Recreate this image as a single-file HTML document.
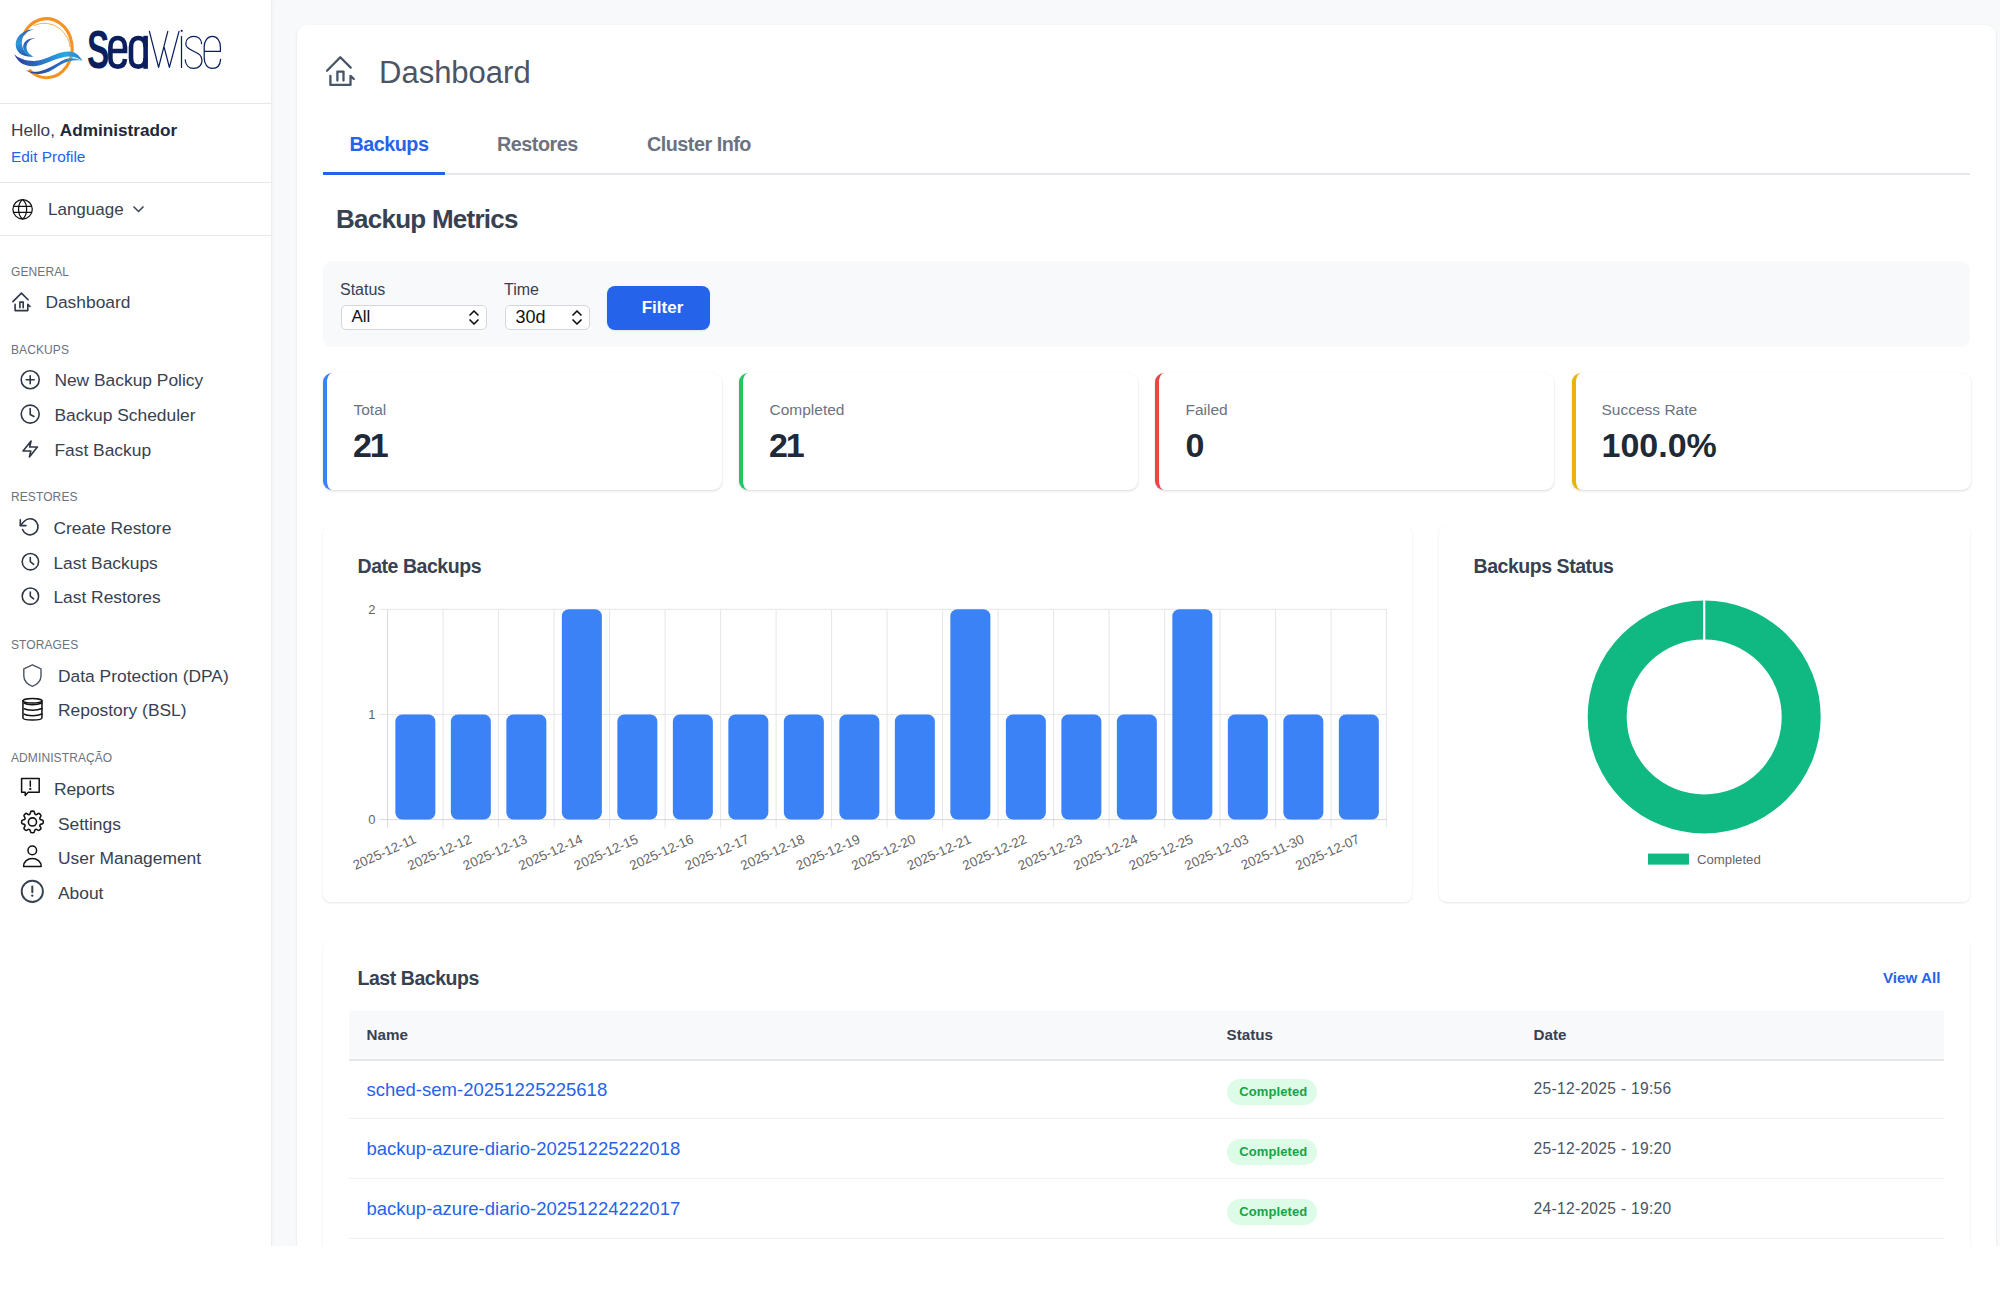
<!DOCTYPE html>
<html>
<head>
<meta charset="utf-8">
<style>
*{box-sizing:border-box;margin:0;padding:0}
html,body{width:2000px;height:1313px;overflow:hidden;background:#fff;font-family:"Liberation Sans",sans-serif}
.t{position:absolute;white-space:nowrap;line-height:20px;height:20px}
#app{position:absolute;left:0;top:0;width:2000px;height:1246px;overflow:hidden;background:#f8f9fb}
#side{position:absolute;left:0;top:0;width:272px;height:1246px;background:#fff;border-right:1px solid #eceef2;box-shadow:1px 0 3px rgba(0,0,0,0.03)}
.hr{position:absolute;left:0;width:271px;height:1px;background:#e5e7eb}
.sec{font-size:12px;color:#6b7280;letter-spacing:0.1px}
.nav{font-size:17.4px;color:#374151}
.ico{position:absolute;overflow:visible}
#card{position:absolute;left:297px;top:25px;width:1699px;height:1300px;background:#fff;border-radius:10px;box-shadow:0 1px 3px rgba(0,0,0,0.08),0 1px 2px rgba(0,0,0,0.04)}
.tab{font-size:19.8px;font-weight:700;color:#6b7280;height:20px;letter-spacing:-0.5px}
.sel{position:absolute;height:24.5px;background:#fff;border:1px solid #d4d6db;border-radius:5px;font-size:17px;line-height:22.5px;padding-left:10px;color:#111}
.mc{position:absolute;top:373px;width:399px;height:117px;background:#fff;border-left:4px solid #3b82f6;border-radius:9px;box-shadow:0 1px 3px rgba(0,0,0,0.1),0 1px 2px rgba(0,0,0,0.06)}
.ml{top:400px;font-size:15.5px;color:#6b7280}
.mv{top:425px;height:40px;line-height:40px;font-size:34px;font-weight:700;color:#1f2937}
.cd{position:absolute;background:#fff;border-radius:8px;box-shadow:0 1px 3px rgba(0,0,0,0.07),0 1px 2px rgba(0,0,0,0.04)}
.h2{font-size:19.5px;font-weight:700;color:#374151;letter-spacing:-0.45px}
.th{top:1025px;font-size:15.2px;font-weight:700;color:#374151}
.td{font-size:18.5px;color:#2563eb}
.dt{font-size:15.6px;color:#4b5563;letter-spacing:0.3px}
.badge{position:absolute;width:90px;height:26px;border-radius:13px;background:#dcfce7;color:#16a34a;font-size:13px;font-weight:700;line-height:26px;text-align:center;padding-left:2.5px;letter-spacing:0.1px}
</style>
</head>
<body>
<div id="app">
<div id="side">
  <!-- logo -->
  <svg class="ico" style="left:0;top:0" width="240" height="100" viewBox="0 0 240 100">
    <defs>
      <linearGradient id="gc1" x1="0" y1="0" x2="0" y2="1">
        <stop offset="0" stop-color="#2766bb"/><stop offset="0.5" stop-color="#2a9bd8"/><stop offset="1" stop-color="#2c58b2"/>
      </linearGradient>
      <linearGradient id="gc2" x1="0" y1="0" x2="0" y2="1">
        <stop offset="0" stop-color="#2d4aa8"/><stop offset="1" stop-color="#25a3de"/>
      </linearGradient>
      <linearGradient id="gw1" x1="0" y1="0" x2="1" y2="0">
        <stop offset="0" stop-color="#2b3896"/><stop offset="0.35" stop-color="#2b6fc2"/><stop offset="0.75" stop-color="#28a8e0"/><stop offset="1" stop-color="#2a7fcf"/>
      </linearGradient>
      <linearGradient id="gw2" x1="0" y1="0" x2="1" y2="0">
        <stop offset="0" stop-color="#2b3896"/><stop offset="0.6" stop-color="#2a6cc0"/><stop offset="1" stop-color="#28a6e0"/>
      </linearGradient>
    </defs>
    <path d="M23.5 35 A25.7 29.5 0 1 1 29 69.8" fill="none" stroke="#f39324" stroke-width="3.1"/>
    <path d="M34 25.6 C45 20.5 60 24 67.5 38 C69 41 69.8 44 70 47" fill="none" stroke="#f39324" stroke-width="0.9" opacity="0.85"/>
    <path fill="url(#gc1)" d="M33.9 29.5 C26 28.5 16 35 15.7 44 C15.5 52 22 57.5 33.9 56.6 C27 55 22.5 51 21.9 44 C21.5 36 26 31 33.9 29.5 Z"/>
    <path fill="url(#gc2)" d="M35.4 38.2 C28 37.5 23 42 23.1 47 C23.2 52 27 56 33.5 56.6 C29.5 54.5 26.5 51.5 26.5 47.5 C26.5 42.5 30 39 35.4 38.2 Z"/>
    <path fill="url(#gw1)" d="M14.1 54 C18 58.5 26 61 34.4 60.9 C44 60.5 54 54 61.3 52.4 C67 51 74 50.5 77.3 54.5 C79.5 56.5 81.5 59 82.6 60.9 C78 58 74 56.4 68 56.6 C58 57.5 48 63 40 65.2 C33 67 27 66 22.7 64.1 C19 62 16 58 14.1 54 Z"/>
    <path fill="url(#gw2)" d="M25.3 69.4 C29 71.5 32 72 36 71.8 C44 71 53 66 61.3 60.9 C66 58.5 70 58 74 58.4 C77 58.8 79 59.3 82 60.5 C78 60 73 60 69.3 60.9 C64 62.5 58 66 49.3 71.6 C44 74 39 74.5 36 73.7 C31 73 27.5 71.5 25.3 69.4 Z"/>
    <text x="87" y="68.5" fill="#0b1f5e" font-family="Liberation Sans" font-weight="700" font-size="54" transform="translate(87 0) scale(0.62 1) translate(-87 0)">S</text>
    <g fill="none" stroke="#0b1f5e" stroke-width="4.6">
      <path d="M110.4 51 H125 V47 C125 41 122 38 117.7 38 C113.4 38 110.4 41 110.4 47 V58 C110.4 64 113.4 66.6 117.7 66.6 C122 66.6 124.6 64 125 59"/>
      <path d="M145.6 35.8 V68.8"/>
      <path d="M145.6 47 C145.6 41 142.5 38 138.3 38 C134 38 131 41 131 47 V58 C131 64 134 66.6 138.3 66.6 C142.5 66.6 145.6 64 145.6 58"/>
    </g>
    <g fill="none" stroke="#0b1f5e" stroke-width="1.25" stroke-linecap="round" stroke-linejoin="round">
      <path d="M149.4 31.4 L158.6 67.4 L167.8 31.4 M164.2 47.4 L169.4 67.4 L179 31.4"/>
      <path d="M181.5 36.6 V67.4"/>
      <path d="M201.6 43.6 C201.3 39 198 36.4 193.8 36.4 C189.2 36.4 185.8 39.3 185.8 43.5 C185.8 47.3 188.4 48.7 193.6 51.2 C199 53.7 202 55.5 202 60.4 C202 65.2 198.5 68.4 193.8 68.4 C188.8 68.4 185.4 65 185.2 59.8"/>
      <path d="M204.2 51.4 H220.4 V47 C220.4 40.5 217 36.4 212.4 36.4 C207.6 36.4 204.2 40.6 204.2 47 V57.8 C204.2 64.4 207.6 68.4 212.4 68.4 C217 68.4 220.2 65 220.6 59.4"/>
    </g>
    <circle cx="181.7" cy="30.8" r="1.1" fill="#0b1f5e"/>
  </svg>
  <div class="hr" style="top:103px"></div>
  <div class="t" style="left:11px;top:120px;font-size:17.2px;color:#374151">Hello, <b style="color:#1f2937">Administrador</b></div>
  <div class="t" style="left:11px;top:147px;font-size:15.4px;color:#2563eb">Edit Profile</div>
  <div class="hr" style="top:182px"></div>
  <svg class="ico" style="left:0;top:190px" width="40" height="40" viewBox="0 190 40 40" fill="none" stroke="#111" stroke-width="1.25">
    <circle cx="22.6" cy="209.3" r="9.7"/>
    <path d="M22.6 199.6 C17.2 203.8 17.2 214.8 22.6 219 M22.6 199.6 C28 203.8 28 214.8 22.6 219"/>
    <path d="M13.6 206.45 H31.6 M13.6 212.3 H31.6"/>
  </svg>
  <div class="t nav" style="left:48px;top:200px;font-size:17px">Language</div>
  <svg class="ico" style="left:132px;top:204px" width="13" height="10" viewBox="0 0 13 10" fill="none" stroke="#374151" stroke-width="1.5"><path d="M1.5 2.5l5 5 5-5"/></svg>
  <div class="hr" style="top:235px"></div>
  <!-- nav -->
  <div class="t sec" style="left:11px;top:261.7px">GENERAL</div>
  <div class="t sec" style="left:11px;top:339.8px">BACKUPS</div>
  <div class="t sec" style="left:11px;top:486.6px">RESTORES</div>
  <div class="t sec" style="left:11px;top:634.6px">STORAGES</div>
  <div class="t sec" style="left:11px;top:747.5px">ADMINISTRAÇÃO</div>
  <div class="t nav" style="left:45.4px;top:292.4px">Dashboard</div>
  <div class="t nav" style="left:54.4px;top:370.4px">New Backup Policy</div>
  <div class="t nav" style="left:54.4px;top:405.4px">Backup Scheduler</div>
  <div class="t nav" style="left:54.4px;top:440.4px">Fast Backup</div>
  <div class="t nav" style="left:53.4px;top:518.0px">Create Restore</div>
  <div class="t nav" style="left:53.4px;top:552.6px">Last Backups</div>
  <div class="t nav" style="left:53.4px;top:587.0px">Last Restores</div>
  <div class="t nav" style="left:58.0px;top:665.8px">Data Protection (DPA)</div>
  <div class="t nav" style="left:58.0px;top:700.3px">Repostory (BSL)</div>
  <div class="t nav" style="left:53.9px;top:778.5px">Reports</div>
  <div class="t nav" style="left:58.0px;top:813.5px">Settings</div>
  <div class="t nav" style="left:58.0px;top:848.2px">User Management</div>
  <div class="t nav" style="left:58.0px;top:882.5px">About</div>
  <svg class="ico" style="left:0;top:0" width="271" height="1246" viewBox="0 0 271 1246" fill="none" stroke="#2d3748" stroke-width="1.6" stroke-linecap="round" stroke-linejoin="round">
    <!-- home -->
    <path d="M12.9 301.6 L21.4 293.1 L28.1 299.8"/>
    <path d="M15.1 304.4 V310.6 H27.8 V304.4 L30 306.5"/>
    <path d="M19.9 307.8 V302.1 H23.2 V307.8"/>
    <!-- plus circle -->
    <circle cx="30.2" cy="379.7" r="9"/>
    <path d="M30.2 375.7 V383.7 M26.2 379.7 H34.2"/>
    <!-- clock -->
    <circle cx="30.2" cy="414.1" r="9"/>
    <path d="M30.2 408.6 V414.5 L34 416.5"/>
    <!-- bolt -->
    <path d="M23 451 L31.1 441 L29.6 447 L37.4 447 L29.4 457 L30.8 451 Z"/>
    <!-- rotate ccw -->
    <path d="M22.5 529.5 A8 8 0 1 0 24.3 521.2 L20.3 525.5"/>
    <path d="M20.3 519.8 V525.6 H26"/>
    <!-- clocks -->
    <circle cx="30.4" cy="561.7" r="8.2"/>
    <path d="M30.3 557.6 V561.6 L33.6 564.3"/>
    <circle cx="30.4" cy="596.2" r="8.2"/>
    <path d="M30.3 592.1 V596.1 L33.6 598.8"/>
    <!-- shield -->
    <path stroke="#4b5563" stroke-width="1.4" d="M32.4 664.8 L23.8 668.8 V676 C23.8 681 28 685 32.4 686.3 C36.8 685 41 681 41 676 V668.8 Z"/>
    <!-- database -->
    <g stroke="#111" stroke-width="1.5">
      <ellipse cx="32.45" cy="700.8" rx="9.5" ry="2.3"/>
      <path d="M22.95 700.8 V717.8 C22.95 719.1 27 720.1 32.45 720.1 C37.9 720.1 41.95 719.1 41.95 717.8 V700.8"/>
      <path d="M24.2 703.2 C26 704.3 29 704.7 32.45 704.7 C36 704.7 39 704.3 41.9 703"/>
      <path d="M24.2 708.7 C26 709.8 29 710.2 32.45 710.2 C36 710.2 39 709.8 41.9 708.5"/>
      <path d="M24.2 714.2 C26 715.3 29 715.7 32.45 715.7 C36 715.7 39 715.3 41.9 714"/>
    </g>
    <g stroke="#111" stroke-width="1.5">
      <!-- reports -->
      <path d="M21.6 778.6 H39.2 V792.2 H28.2 L25.2 795.4 V792.2 H21.6 Z"/>
      <path d="M30.3 781 V786.2"/>
      <circle cx="30.3" cy="789" r="0.4" fill="#111"/>
      <!-- gear -->
      <g transform="translate(18.05 807.55) scale(1.2)" stroke-width="1.3">
      <path d="M10.343 3.94c.09-.542.56-.94 1.11-.94h1.093c.55 0 1.02.398 1.11.94l.149.894c.07.424.384.764.78.93.398.164.855.142 1.205-.108l.737-.527a1.125 1.125 0 0 1 1.45.12l.773.774c.39.389.44 1.002.12 1.45l-.527.737c-.25.35-.272.806-.107 1.204.165.397.505.71.93.78l.893.15c.543.09.94.559.94 1.109v1.094c0 .55-.397 1.02-.94 1.11l-.894.149c-.424.07-.764.383-.929.78-.165.398-.143.854.107 1.204l.527.738c.32.447.269 1.06-.12 1.45l-.774.773a1.125 1.125 0 0 1-1.449.12l-.738-.527c-.35-.25-.806-.272-1.203-.107-.398.165-.71.505-.781.929l-.149.894c-.09.542-.56.94-1.11.94h-1.094c-.55 0-1.019-.398-1.11-.94l-.148-.894c-.071-.424-.384-.764-.781-.93-.398-.164-.854-.142-1.204.108l-.738.527c-.447.32-1.06.269-1.45-.12l-.773-.774a1.125 1.125 0 0 1-.12-1.45l.527-.737c.25-.35.272-.806.108-1.204-.165-.397-.506-.71-.93-.78l-.894-.15c-.542-.09-.94-.56-.94-1.109v-1.094c0-.55.398-1.020.94-1.11l.894-.149c.424-.07.765-.383.93-.78.165-.398.143-.854-.108-1.204l-.526-.738a1.125 1.125 0 0 1 .12-1.45l.773-.773a1.125 1.125 0 0 1 1.45-.12l.737.527c.35.25.807.272 1.204.107.397-.165.71-.505.78-.929l.15-.894Z"/>
      <circle cx="12" cy="12" r="3.4"/>
      </g>
      <!-- user -->
      <circle cx="32.3" cy="850.4" r="4.3"/>
      <path d="M23.6 866.2 C23.6 861.6 27.6 858.4 32.3 858.4 C37 858.4 41.2 861.6 41.2 866.2 V866.4 H23.6 Z"/>
    </g>
    <!-- about -->
    <circle cx="32.3" cy="891.4" r="10.6" stroke="#374151" stroke-width="1.9"/>
    <path d="M32.3 886.4 V892.2" stroke="#374151" stroke-width="2"/>
    <circle cx="32.3" cy="895.6" r="0.6" fill="#374151" stroke="#374151" stroke-width="1.2"/>
  </svg>
</div>
<div id="card"></div>
<!-- header -->
<svg class="ico" style="left:318px;top:48px" width="44" height="44" viewBox="0 0 44 44" fill="none" stroke="#475569" stroke-width="2.3" stroke-linecap="round" stroke-linejoin="round">
  <path d="M9 22.8 L22.3 9.2 L32.7 19.6"/>
  <path d="M12.4 27.8 V36.9 H32.5 V27.8 L35.8 31"/>
  <path d="M19.4 32.5 V23.6 H25.5 V32.5"/>
</svg>
<div class="t" style="left:379px;top:52.5px;height:40px;line-height:40px;font-size:31px;color:#4b5563">Dashboard</div>
<!-- tabs -->
<div class="t tab" style="left:349.5px;top:134px;color:#2563eb">Backups</div>
<div class="t tab" style="left:497px;top:134px">Restores</div>
<div class="t tab" style="left:647px;top:134px">Cluster Info</div>
<div style="position:absolute;left:323px;top:173px;width:1647px;height:2px;background:#e5e7eb"></div>
<div style="position:absolute;left:323px;top:172px;width:122px;height:3px;background:#2563eb"></div>
<div class="t" style="left:336px;top:204px;height:30px;line-height:30px;font-size:26px;font-weight:700;color:#374151;letter-spacing:-0.75px">Backup Metrics</div>
<!-- filter -->
<div style="position:absolute;left:323px;top:261px;width:1647px;height:86px;background:#f8f9fb;border-radius:9px"></div>
<div class="t" style="left:340px;top:279.5px;font-size:16px;color:#374151">Status</div>
<div class="t" style="left:504px;top:279.5px;font-size:16px;color:#374151">Time</div>
<div class="sel" style="left:340.5px;top:305px;width:146px">All</div>
<div class="sel" style="left:504.5px;top:305px;width:85px;font-size:18px">30d</div>
<svg class="ico" style="left:466px;top:308px" width="16" height="20" viewBox="0 0 16 20" fill="none" stroke="#111" stroke-width="1.7" stroke-linecap="round" stroke-linejoin="round"><path d="M4 7 L8 3 L12 7 M4 12 L8 16 L12 12"/></svg>
<svg class="ico" style="left:569px;top:308px" width="16" height="20" viewBox="0 0 16 20" fill="none" stroke="#111" stroke-width="1.7" stroke-linecap="round" stroke-linejoin="round"><path d="M4 7 L8 3 L12 7 M4 12 L8 16 L12 12"/></svg>
<div style="position:absolute;left:607px;top:286px;width:103px;height:44px;background:#2563eb;border-radius:8px;box-shadow:0 1px 2px rgba(0,0,0,0.08);color:#fff;font-size:17px;font-weight:700;line-height:44px;text-align:center;padding-left:8px">Filter</div>
<!-- metric cards -->
<div class="mc" style="left:323px;border-left-color:#3b82f6"></div>
<div class="mc" style="left:739px;border-left-color:#22c55e"></div>
<div class="mc" style="left:1155px;border-left-color:#ef4444"></div>
<div class="mc" style="left:1572px;border-left-color:#eab308"></div>
<div class="t ml" style="left:353.5px">Total</div>
<div class="t mv" style="left:353px;letter-spacing:-2.2px">21</div>
<div class="t ml" style="left:769.5px">Completed</div>
<div class="t mv" style="left:769px;letter-spacing:-2.2px">21</div>
<div class="t ml" style="left:1185.5px">Failed</div>
<div class="t mv" style="left:1185.5px">0</div>
<div class="t ml" style="left:1601.5px">Success Rate</div>
<div class="t mv" style="left:1601.5px">100.0%</div>
<!-- charts -->
<div class="cd" style="left:322.5px;top:524.5px;width:1089.5px;height:377.5px"></div>
<div class="cd" style="left:1438.5px;top:524.5px;width:531.5px;height:377.5px"></div>
<div class="t h2" style="left:357.5px;top:555.7px">Date Backups</div>
<div class="t h2" style="left:1473.5px;top:555.7px">Backups Status</div>
<svg class="ico" style="left:0;top:0" width="2000" height="1246" viewBox="0 0 2000 1246">
<line x1="387.60" y1="609.3" x2="387.60" y2="827.6" stroke="#d9d9d9" stroke-width="1"/>
<line x1="443.10" y1="609.3" x2="443.10" y2="827.6" stroke="#e6e6e6" stroke-width="1"/>
<line x1="498.60" y1="609.3" x2="498.60" y2="827.6" stroke="#e6e6e6" stroke-width="1"/>
<line x1="554.10" y1="609.3" x2="554.10" y2="827.6" stroke="#e6e6e6" stroke-width="1"/>
<line x1="609.60" y1="609.3" x2="609.60" y2="827.6" stroke="#e6e6e6" stroke-width="1"/>
<line x1="665.10" y1="609.3" x2="665.10" y2="827.6" stroke="#e6e6e6" stroke-width="1"/>
<line x1="720.60" y1="609.3" x2="720.60" y2="827.6" stroke="#e6e6e6" stroke-width="1"/>
<line x1="776.10" y1="609.3" x2="776.10" y2="827.6" stroke="#e6e6e6" stroke-width="1"/>
<line x1="831.60" y1="609.3" x2="831.60" y2="827.6" stroke="#e6e6e6" stroke-width="1"/>
<line x1="887.10" y1="609.3" x2="887.10" y2="827.6" stroke="#e6e6e6" stroke-width="1"/>
<line x1="942.60" y1="609.3" x2="942.60" y2="827.6" stroke="#e6e6e6" stroke-width="1"/>
<line x1="998.10" y1="609.3" x2="998.10" y2="827.6" stroke="#e6e6e6" stroke-width="1"/>
<line x1="1053.60" y1="609.3" x2="1053.60" y2="827.6" stroke="#e6e6e6" stroke-width="1"/>
<line x1="1109.10" y1="609.3" x2="1109.10" y2="827.6" stroke="#e6e6e6" stroke-width="1"/>
<line x1="1164.60" y1="609.3" x2="1164.60" y2="827.6" stroke="#e6e6e6" stroke-width="1"/>
<line x1="1220.10" y1="609.3" x2="1220.10" y2="827.6" stroke="#e6e6e6" stroke-width="1"/>
<line x1="1275.60" y1="609.3" x2="1275.60" y2="827.6" stroke="#e6e6e6" stroke-width="1"/>
<line x1="1331.10" y1="609.3" x2="1331.10" y2="827.6" stroke="#e6e6e6" stroke-width="1"/>
<line x1="1386.60" y1="609.3" x2="1386.60" y2="827.6" stroke="#e6e6e6" stroke-width="1"/>
<line x1="379.5" y1="609.3" x2="1386.6" y2="609.3" stroke="#e6e6e6" stroke-width="1"/>
<line x1="379.5" y1="714.4" x2="1386.6" y2="714.4" stroke="#e6e6e6" stroke-width="1"/>
<line x1="379.5" y1="819.6" x2="1386.6" y2="819.6" stroke="#d9d9d9" stroke-width="1"/>
<rect x="395.35" y="714.5" width="40" height="105.1" rx="7" fill="#3b82f6"/>
<rect x="450.85" y="714.5" width="40" height="105.1" rx="7" fill="#3b82f6"/>
<rect x="506.35" y="714.5" width="40" height="105.1" rx="7" fill="#3b82f6"/>
<rect x="561.85" y="609.3" width="40" height="210.3" rx="7" fill="#3b82f6"/>
<rect x="617.35" y="714.5" width="40" height="105.1" rx="7" fill="#3b82f6"/>
<rect x="672.85" y="714.5" width="40" height="105.1" rx="7" fill="#3b82f6"/>
<rect x="728.35" y="714.5" width="40" height="105.1" rx="7" fill="#3b82f6"/>
<rect x="783.85" y="714.5" width="40" height="105.1" rx="7" fill="#3b82f6"/>
<rect x="839.35" y="714.5" width="40" height="105.1" rx="7" fill="#3b82f6"/>
<rect x="894.85" y="714.5" width="40" height="105.1" rx="7" fill="#3b82f6"/>
<rect x="950.35" y="609.3" width="40" height="210.3" rx="7" fill="#3b82f6"/>
<rect x="1005.85" y="714.5" width="40" height="105.1" rx="7" fill="#3b82f6"/>
<rect x="1061.35" y="714.5" width="40" height="105.1" rx="7" fill="#3b82f6"/>
<rect x="1116.85" y="714.5" width="40" height="105.1" rx="7" fill="#3b82f6"/>
<rect x="1172.35" y="609.3" width="40" height="210.3" rx="7" fill="#3b82f6"/>
<rect x="1227.85" y="714.5" width="40" height="105.1" rx="7" fill="#3b82f6"/>
<rect x="1283.35" y="714.5" width="40" height="105.1" rx="7" fill="#3b82f6"/>
<rect x="1338.85" y="714.5" width="40" height="105.1" rx="7" fill="#3b82f6"/>
<text x="375.5" y="613.9" text-anchor="end" font-family="Liberation Sans" font-size="13" fill="#666">2</text>
<text x="375.5" y="719.0" text-anchor="end" font-family="Liberation Sans" font-size="13" fill="#666">1</text>
<text x="375.5" y="824.2" text-anchor="end" font-family="Liberation Sans" font-size="13" fill="#666">0</text>
<text transform="translate(413.25 833.8) rotate(-24)" x="0" y="0" text-anchor="end" dominant-baseline="hanging" font-family="Liberation Sans" font-size="13.4" fill="#666">2025-12-11</text>
<text transform="translate(468.75 833.8) rotate(-24)" x="0" y="0" text-anchor="end" dominant-baseline="hanging" font-family="Liberation Sans" font-size="13.4" fill="#666">2025-12-12</text>
<text transform="translate(524.25 833.8) rotate(-24)" x="0" y="0" text-anchor="end" dominant-baseline="hanging" font-family="Liberation Sans" font-size="13.4" fill="#666">2025-12-13</text>
<text transform="translate(579.75 833.8) rotate(-24)" x="0" y="0" text-anchor="end" dominant-baseline="hanging" font-family="Liberation Sans" font-size="13.4" fill="#666">2025-12-14</text>
<text transform="translate(635.25 833.8) rotate(-24)" x="0" y="0" text-anchor="end" dominant-baseline="hanging" font-family="Liberation Sans" font-size="13.4" fill="#666">2025-12-15</text>
<text transform="translate(690.75 833.8) rotate(-24)" x="0" y="0" text-anchor="end" dominant-baseline="hanging" font-family="Liberation Sans" font-size="13.4" fill="#666">2025-12-16</text>
<text transform="translate(746.25 833.8) rotate(-24)" x="0" y="0" text-anchor="end" dominant-baseline="hanging" font-family="Liberation Sans" font-size="13.4" fill="#666">2025-12-17</text>
<text transform="translate(801.75 833.8) rotate(-24)" x="0" y="0" text-anchor="end" dominant-baseline="hanging" font-family="Liberation Sans" font-size="13.4" fill="#666">2025-12-18</text>
<text transform="translate(857.25 833.8) rotate(-24)" x="0" y="0" text-anchor="end" dominant-baseline="hanging" font-family="Liberation Sans" font-size="13.4" fill="#666">2025-12-19</text>
<text transform="translate(912.75 833.8) rotate(-24)" x="0" y="0" text-anchor="end" dominant-baseline="hanging" font-family="Liberation Sans" font-size="13.4" fill="#666">2025-12-20</text>
<text transform="translate(968.25 833.8) rotate(-24)" x="0" y="0" text-anchor="end" dominant-baseline="hanging" font-family="Liberation Sans" font-size="13.4" fill="#666">2025-12-21</text>
<text transform="translate(1023.75 833.8) rotate(-24)" x="0" y="0" text-anchor="end" dominant-baseline="hanging" font-family="Liberation Sans" font-size="13.4" fill="#666">2025-12-22</text>
<text transform="translate(1079.25 833.8) rotate(-24)" x="0" y="0" text-anchor="end" dominant-baseline="hanging" font-family="Liberation Sans" font-size="13.4" fill="#666">2025-12-23</text>
<text transform="translate(1134.75 833.8) rotate(-24)" x="0" y="0" text-anchor="end" dominant-baseline="hanging" font-family="Liberation Sans" font-size="13.4" fill="#666">2025-12-24</text>
<text transform="translate(1190.25 833.8) rotate(-24)" x="0" y="0" text-anchor="end" dominant-baseline="hanging" font-family="Liberation Sans" font-size="13.4" fill="#666">2025-12-25</text>
<text transform="translate(1245.75 833.8) rotate(-24)" x="0" y="0" text-anchor="end" dominant-baseline="hanging" font-family="Liberation Sans" font-size="13.4" fill="#666">2025-12-03</text>
<text transform="translate(1301.25 833.8) rotate(-24)" x="0" y="0" text-anchor="end" dominant-baseline="hanging" font-family="Liberation Sans" font-size="13.4" fill="#666">2025-11-30</text>
<text transform="translate(1356.75 833.8) rotate(-24)" x="0" y="0" text-anchor="end" dominant-baseline="hanging" font-family="Liberation Sans" font-size="13.4" fill="#666">2025-12-07</text>
<circle cx="1704.2" cy="717.0" r="97.0" fill="none" stroke="#10b981" stroke-width="39.0"/>
<line x1="1704.2" y1="599.5" x2="1704.2" y2="640.5" stroke="#fff" stroke-width="2.2"/>
<rect x="1648" y="853.6" width="41" height="11" fill="#10b981"/>
<text x="1697" y="863.6" font-family="Liberation Sans" font-size="13.2" fill="#666">Completed</text>
</svg>
<!-- table -->
<div class="cd" style="left:322.5px;top:940px;width:1647.5px;height:400px"></div>
<div class="t h2" style="left:357.5px;top:967.8px">Last Backups</div>
<div class="t" style="left:1883px;top:968px;font-size:15.2px;font-weight:700;color:#2563eb">View All</div>
<div style="position:absolute;left:349px;top:1011px;width:1595px;height:48px;background:#f8f9fb;border-bottom:2px solid #e5e7eb;box-sizing:content-box"></div>
<div class="t th" style="left:366.5px">Name</div>
<div class="t th" style="left:1226.5px">Status</div>
<div class="t th" style="left:1533.5px">Date</div>
<div class="t td" style="left:366.5px;top:1079.5px">sched-sem-20251225225618</div>
<div class="badge" style="left:1227px;top:1079.0px">Completed</div>
<div class="t dt" style="left:1533.5px;top:1078.8px">25-12-2025 - 19:56</div>
<div style="position:absolute;left:349px;top:1118.3px;width:1595px;height:1px;background:#f0f1f4"></div>
<div class="t td" style="left:366.5px;top:1139.4px">backup-azure-diario-20251225222018</div>
<div class="badge" style="left:1227px;top:1138.9px">Completed</div>
<div class="t dt" style="left:1533.5px;top:1138.7px">25-12-2025 - 19:20</div>
<div style="position:absolute;left:349px;top:1178.2px;width:1595px;height:1px;background:#f0f1f4"></div>
<div class="t td" style="left:366.5px;top:1199.3px">backup-azure-diario-20251224222017</div>
<div class="badge" style="left:1227px;top:1198.8px">Completed</div>
<div class="t dt" style="left:1533.5px;top:1198.6px">24-12-2025 - 19:20</div>
<div style="position:absolute;left:349px;top:1238.1px;width:1595px;height:1px;background:#f0f1f4"></div>
</div>
</body>
</html>
